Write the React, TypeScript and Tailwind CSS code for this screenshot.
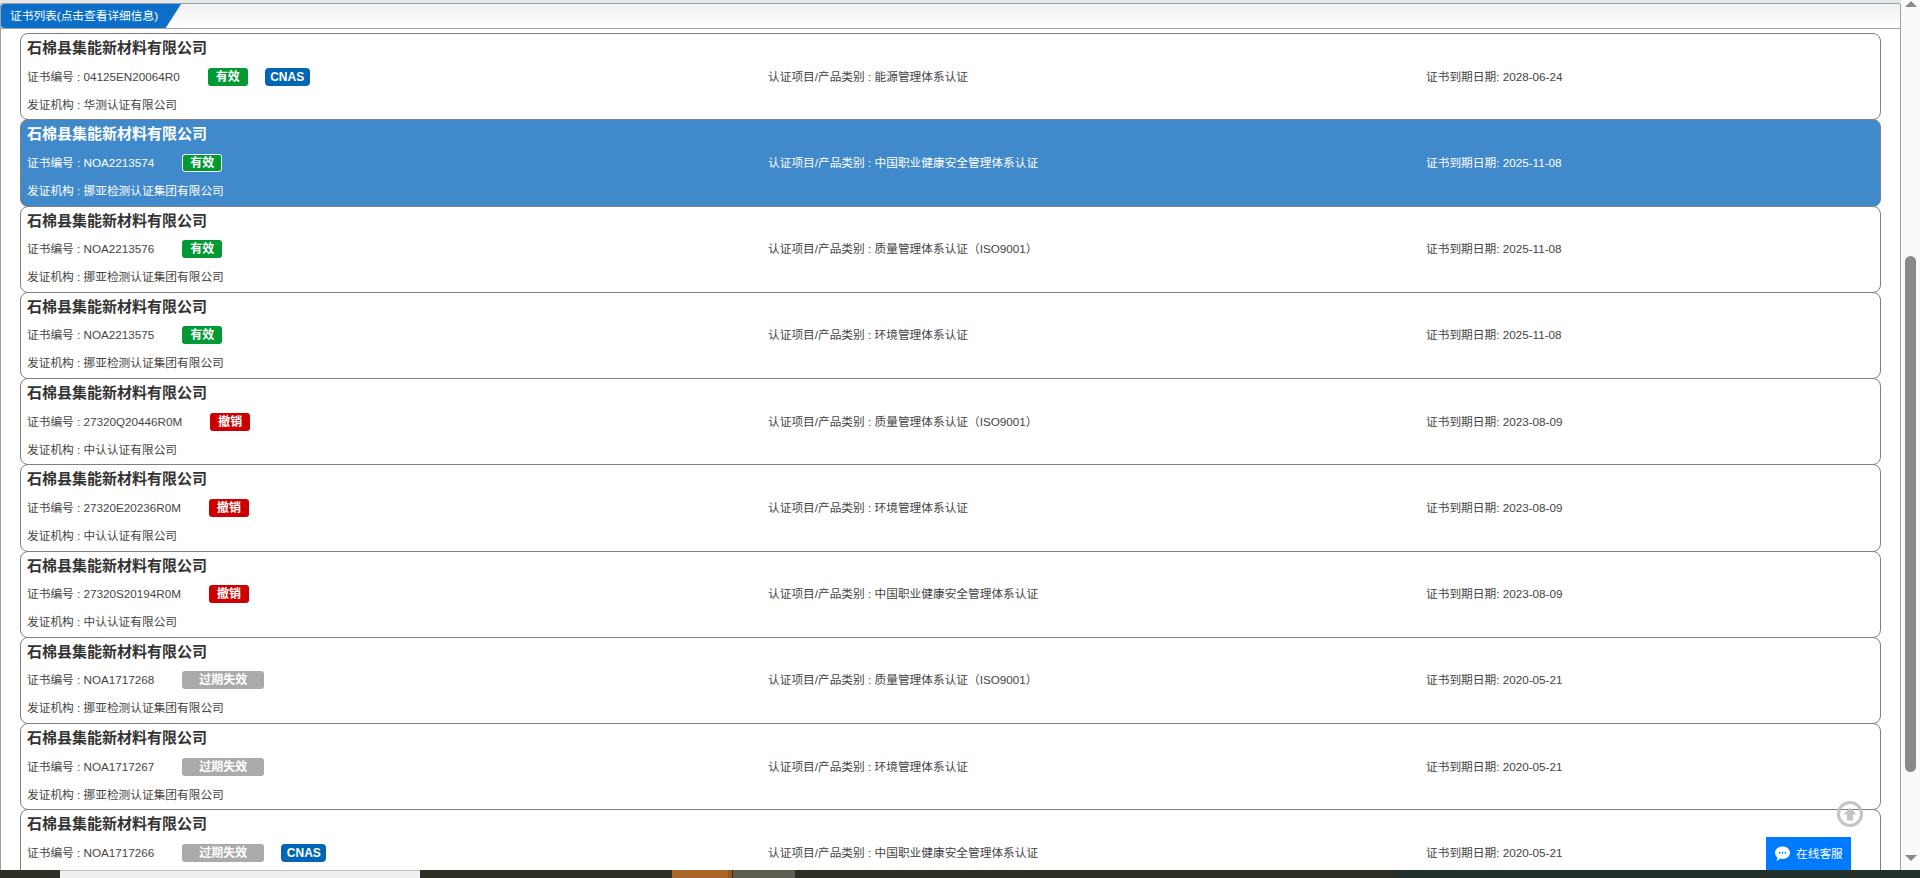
type Row = {
  no: string;
  org?: string;
  type: string;
  date: string;
  status: "valid" | "revoked" | "expired";
  cnas?: boolean;
  active?: boolean;
};

const rows: Row[] = [
  { no: "04125EN20064R0", org: "华测认证有限公司", type: "能源管理体系认证", date: "2028-06-24", status: "valid", cnas: true },
  { no: "NOA2213574", org: "挪亚检测认证集团有限公司", type: "中国职业健康安全管理体系认证", date: "2025-11-08", status: "valid", active: true },
  { no: "NOA2213576", org: "挪亚检测认证集团有限公司", type: "质量管理体系认证（ISO9001）", date: "2025-11-08", status: "valid" },
  { no: "NOA2213575", org: "挪亚检测认证集团有限公司", type: "环境管理体系认证", date: "2025-11-08", status: "valid" },
  { no: "27320Q20446R0M", org: "中认认证有限公司", type: "质量管理体系认证（ISO9001）", date: "2023-08-09", status: "revoked" },
  { no: "27320E20236R0M", org: "中认认证有限公司", type: "环境管理体系认证", date: "2023-08-09", status: "revoked" },
  { no: "27320S20194R0M", org: "中认认证有限公司", type: "中国职业健康安全管理体系认证", date: "2023-08-09", status: "revoked" },
  { no: "NOA1717268", org: "挪亚检测认证集团有限公司", type: "质量管理体系认证（ISO9001）", date: "2020-05-21", status: "expired" },
  { no: "NOA1717267", org: "挪亚检测认证集团有限公司", type: "环境管理体系认证", date: "2020-05-21", status: "expired" },
  { no: "NOA1717266", type: "中国职业健康安全管理体系认证", date: "2020-05-21", status: "expired", cnas: true },
];

function StatusBadge({ status, active }: { status: Row["status"]; active?: boolean }) {
  const base = "ml-[28px] flex h-[18px] items-center justify-center rounded-[3px] text-xs font-bold text-white";
  if (status === "valid") {
    return <span className={`${base} w-10 bg-[#009933] ${active ? "border border-white" : ""}`}>有效</span>;
  }
  if (status === "revoked") {
    return <span className={`${base} w-10 bg-[#cc0000]`}>撤销</span>;
  }
  return <span className={`${base} w-[82px] bg-[#aaaaaa]`}>过期失效</span>;
}

function CertRow({ row }: { row: Row }) {
  return (
    <div
      className={`-mt-px h-[87.25px] shrink-0 rounded-lg border border-[#808080] pl-[6px] first:mt-0 ${
        row.active ? "bg-[#408acb] text-white" : "bg-white text-[#444444]"
      }`}
    >
      <div className={`pt-[2px] text-[15px] leading-[24px] font-bold ${row.active ? "text-white" : "text-[#333333]"}`}>
        石棉县集能新材料有限公司
      </div>
      <div className="mt-[1.5px] grid h-[30px] grid-cols-[741px_658px_1fr] items-center text-[11.7px]">
        <div className="flex items-center">
          <span>证书编号 : {row.no}</span>
          <StatusBadge status={row.status} active={row.active} />
          {row.cnas && (
            <span className="ml-[17px] flex h-[18px] w-[45px] items-center justify-center rounded-[4px] bg-[#0066b3] text-xs font-bold text-white">
              CNAS
            </span>
          )}
        </div>
        <div>认证项目/产品类别 : {row.type}</div>
        <div>证书到期日期: {row.date}</div>
      </div>
      {row.org && <div className="text-[11.7px] leading-[26px]">发证机构 : {row.org}</div>}
    </div>
  );
}

export default function App() {
  return (
    <div
      className="relative flex h-[878px] flex-col overflow-hidden bg-white"
      style={{ fontFamily: '"Liberation Sans", "Noto Sans CJK SC", sans-serif' }}
    >
      <div className="flex h-[870px] min-h-0">
        <main className="flex min-w-0 flex-1 flex-col bg-[#e3e8ec] pt-[3px]">
          <div className="flex min-h-0 flex-1 flex-col overflow-hidden rounded-t-[3px] border-x border-t border-[#a0a0a0] bg-white">
            <div className="flex h-[25px] shrink-0 border-b border-[#a0a0a0] bg-gradient-to-b from-[#f0f0f0] to-white">
              <div className="flex h-6 w-[180px] items-center rounded-l-[3px] bg-[#0b6fca] pl-[9px] text-[11.7px] text-white [clip-path:polygon(0_0,100%_0,91.5%_100%,0_100%)]">
                证书列表(点击查看详细信息)
              </div>
            </div>
            <div className="flex flex-col pt-[4px] pr-[19px] pl-[19px]">
              {rows.map((row) => (
                <CertRow key={row.no} row={row} />
              ))}
            </div>
          </div>
        </main>
        <aside className="relative flex w-[19px] shrink-0 flex-col items-center bg-[#fafafa]">
          <div className="mt-px h-0 w-0 border-x-[6.5px] border-b-[6px] border-x-transparent border-b-[#8a8a8a]" />
          <div className="mt-[249px] h-[516px] w-[11px] rounded-full bg-[#8a8a8a]" />
          <div className="mt-auto mb-[9px] h-0 w-0 border-x-[6.5px] border-t-[6px] border-x-transparent border-t-[#8a8a8a]" />
        </aside>
      </div>

      <div className="flex h-2 shrink-0 bg-[#24302c]">
        <div className="w-[60px] bg-[#2c2f25]" />
        <div className="w-[360px] border-t border-[#bbbbbb] bg-[#efefef]" />
        <div className="w-[252px] bg-[#2c2f25]" />
        <div className="w-[56px] bg-[#aa6628]" />
        <div className="w-[4px] bg-[#96561f]" />
        <div className="w-px bg-[#2c2f25]" />
        <div className="w-[62px] bg-[#5b5e50]" />
        <div className="w-[600px] bg-[#2c2f25]" />
      </div>

      <div className="absolute top-[801px] left-[1837px] flex h-[26px] w-[26px] items-center justify-center rounded-full border-[3.5px] border-[#c4c4c4]">
        <svg width="14" height="14" viewBox="0 0 14 14" className="fill-[#c4c4c4]">
          <path d="M7 0.5 13.5 7.5H10V13.5H4V7.5H0.5z" />
        </svg>
      </div>
      <div className="absolute top-[837px] left-[1766px] flex h-[33px] w-[85px] items-center gap-[6px] bg-[#007aff] pl-[9px] text-[11.7px] text-white">
        <svg width="15" height="15" viewBox="0 0 15 15" className="shrink-0">
          <path d="M7.5 0.5C11.6 0.5 15 3.2 15 6.8S11.6 13 7.5 13C6.6 13 5.8 12.9 5 12.6 4.2 13.6 2.8 14.7 1 14.8 1.9 13.9 2.4 12.6 2.4 11.4 0.9 10.3 0 8.6 0 6.8 0 3.2 3.4 0.5 7.5 0.5Z" fill="#ffffff" />
          <circle cx="4.6" cy="6.8" r="0.9" fill="#007aff" />
          <circle cx="7.5" cy="6.8" r="0.9" fill="#007aff" />
          <circle cx="10.4" cy="6.8" r="0.9" fill="#007aff" />
        </svg>
        在线客服
      </div>
    </div>
  );
}
